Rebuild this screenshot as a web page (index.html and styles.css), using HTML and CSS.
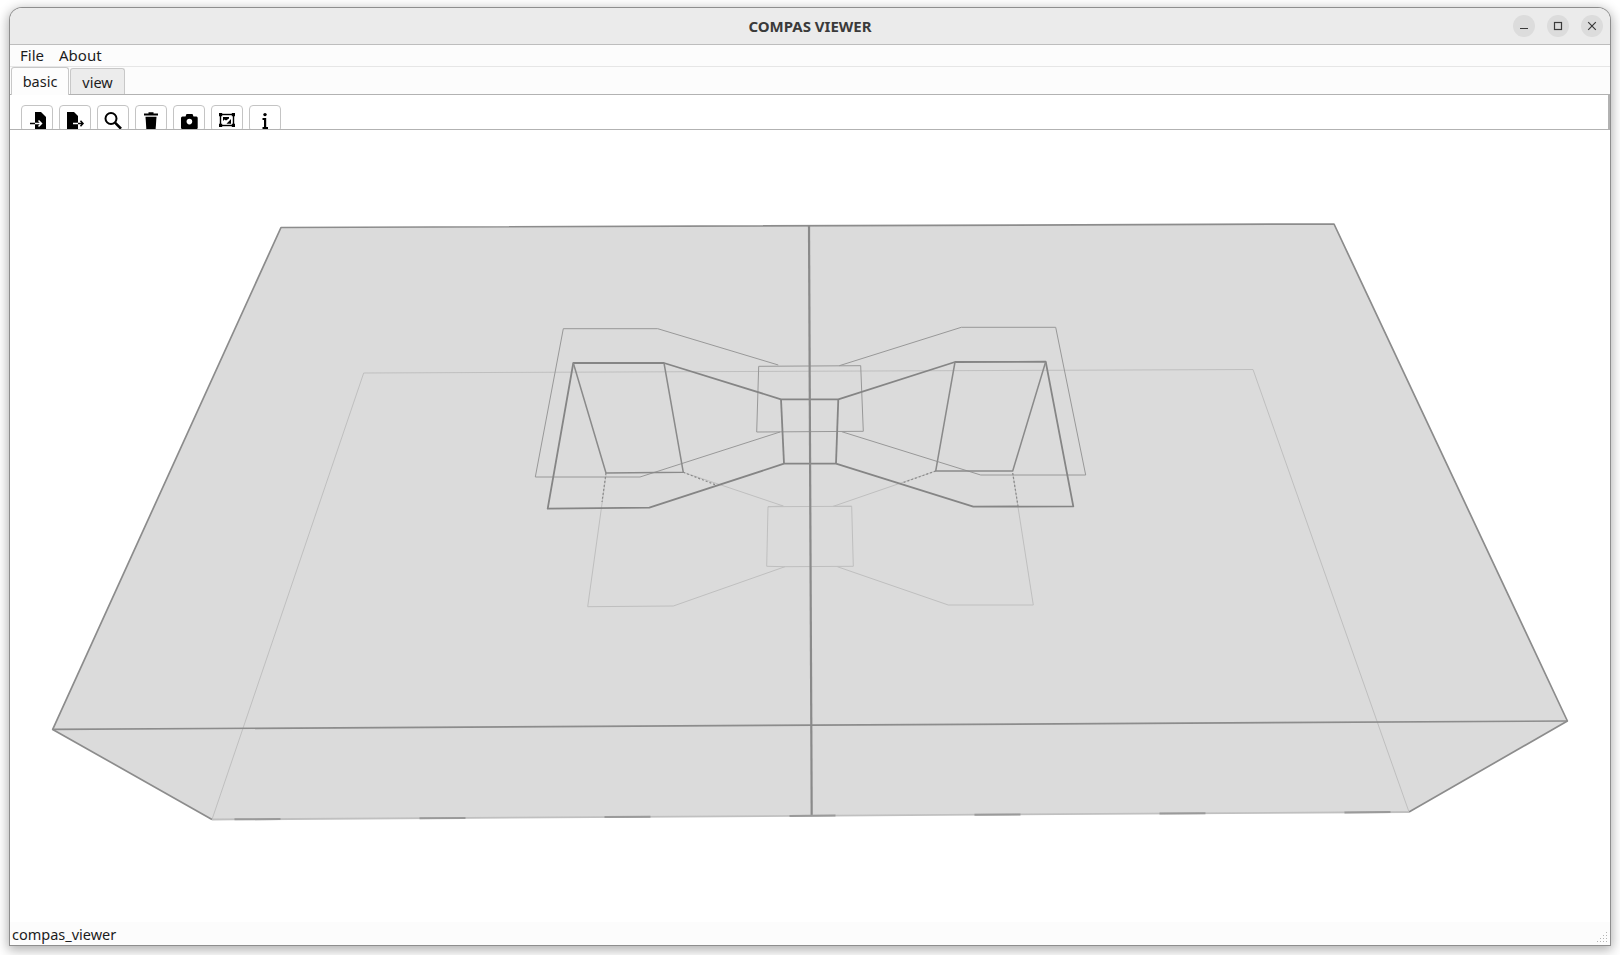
FILE: index.html
```html
<!DOCTYPE html>
<html lang="en">
<head>
<meta charset="utf-8">
<title>COMPAS VIEWER</title>
<link rel="stylesheet" href="styles.css">
</head>
<body>
<div class="window">
  <header class="titlebar">
    <span class="title">COMPAS VIEWER</span>
    <div class="controls">
      <span class="ctl"><svg width="22" height="22" viewBox="0 0 22 22"><path d="M7 13.5H15" class="ctl-i"/></svg></span>
      <span class="ctl"><svg width="22" height="22" viewBox="0 0 22 22"><rect x="7.5" y="7.5" width="7" height="7" class="ctl-i"/></svg></span>
      <span class="ctl"><svg width="22" height="22" viewBox="0 0 22 22"><path d="M7.2 7.2L14.8 14.8M14.8 7.2L7.2 14.8" class="ctl-i"/></svg></span>
    </div>
  </header>
  <nav class="menubar"><span>File</span><span>About</span></nav>
  <div class="tabbar">
    <span class="tab tab-on">basic</span>
    <span class="tab">view</span>
  </div>
  <div class="toolbar">
    <button class="tool"><svg class="ico" viewBox="0 0 20 20"><path d="M8 1H14L19 6V19H8Z"/><path d="M3 12.5H8" class="blk"/><path d="M8 12.5H14M11.5 9.5L14.5 12.5L11.5 15.5" class="wht"/></svg></button>
    <button class="tool"><svg class="ico" viewBox="0 0 20 20"><path d="M2 1H9L13 5V19H2Z"/><path d="M8 12.5H13" class="wht"/><path d="M13 12.5H18M15.5 9.8L18 12.5L15.5 15.2" class="blk"/></svg></button>
    <button class="tool"><svg class="ico" viewBox="0 0 20 20"><circle cx="8" cy="7.5" r="5.5" class="blk2"/><path d="M12 11.7L18 17.7" class="blk3"/></svg></button>
    <button class="tool"><svg class="ico" viewBox="0 0 20 20"><path d="M3 2.5H7.5V1.2H12.5V2.5H17V4.6H3Z"/><path d="M4.5 5.8H15.5L14.5 20H5.5Z"/></svg></button>
    <button class="tool"><svg class="ico" viewBox="0 0 20 20"><path d="M3.5 5.5H6.5L7.5 3H13.5L14.5 5.5H17.5Q18.7 5.5 18.7 7V17Q18.7 18 17.5 18H3.5Q2 18 2 17V7Q2 5.5 3.5 5.5Z"/><circle cx="10.4" cy="10.6" r="2.8" class="fw"/></svg></button>
    <button class="tool"><svg class="ico" viewBox="0 0 20 20"><rect x="3.5" y="3.5" width="13" height="11" class="blk2 thin"/><path d="M2 2H5.2V5.2H2ZM14.8 2H18V5.2H14.8ZM2 12.8H5.2V16H2ZM14.8 12.8H18V16H14.8Z"/><path d="M6 6H12V7.5L9 9.5L7.5 8.5L6 10Z"/><path d="M14 8V12.8H9.5Z"/></svg></button>
    <button class="tool"><svg class="ico" viewBox="0 0 20 20"><circle cx="10" cy="3.6" r="1.7"/><path d="M7.5 7H11.2V16H13V18H7.5V16H9V9H7.5Z"/></svg></button>
  </div>
  <main class="viewport">
    <svg class="scene" width="1600" height="792" viewBox="10 130 1600 792">
      <polygon class="solid" points="281,227.5 1334,224 1567.4,721 1409,812 212,819.5 52.7,729.4"/>
      <!-- far wireframe -->
      <polyline class="faint" points="212,819.5 363.7,373 1253,369.5 1409,812"/>
      <polyline class="faint" points="606,475 587.7,606.7 673.3,606 785,566.7 766.7,566.3 768,506.7 783.3,506 683.3,472.3"/>
      <polyline class="faint" points="785,566.7 853.3,566.3 851.7,506.3 768,506.7"/>
      <polyline class="faint" points="935.7,471 833.3,506.3 851.7,506.3"/>
      <polyline class="faint" points="1012.7,473 1033.3,605 948.3,605 837.3,566.7"/>
      <!-- middle outline -->
      <polyline class="mid" points="778.3,365 657.7,328.7 563.3,328.7 535.3,477 640,477 780,432"/>
      <polyline class="mid" points="839.3,365.7 961.3,327.3 1055.7,327.3 1085.7,475 980.7,475 841.7,431.7"/>
      <polygon class="mid" points="758.7,366.3 860.7,365.7 863.3,431.3 756.7,432"/>
      <!-- near outline -->
      <polygon class="thick" points="573.3,363 664,363 781,399.3 838.3,399.3 955,362 1045.7,361.7 1073.3,506.3 973.3,506.7 836,463.7 784,463.7 649.3,507.7 547.7,508.7"/>
      <line class="thick" x1="781" y1="399.3" x2="784" y2="463.7"/>
      <line class="thick" x1="838.3" y1="399.3" x2="836" y2="463.7"/>
      <polyline class="thick2" points="573.3,363 606,473 683.3,472.3 664,363"/>
      <polyline class="thick2" points="955,362 935.7,471 1012.7,471 1045.7,361.7"/>
      <path class="dots" d="M606 473L602 502M683.3 472.3L716 485M935.7 471L902 483M1012.7 473L1018 506"/>
      <!-- box edges -->
      <polyline class="edge" points="212,819.5 52.7,729.4 281,227.5 1334,224 1567.4,721 1409,812"/>
      <line class="edge" x1="52.7" y1="729.4" x2="1567.4" y2="721"/>
      <line class="axis" x1="809" y1="226" x2="811.7" y2="816"/>
      <line class="base" x1="212" y1="819.5" x2="1409" y2="812"/>
      <line class="base-d" x1="212" y1="819.5" x2="1409" y2="812"/>
    </svg>
  </main>
  <footer class="statusbar">
    <span>compas_viewer</span>
    <svg class="grip" width="11" height="11" viewBox="0 0 11 11"><path d="M9 0h1v1H9zM6 3h1v1H6zM9 3h1v1H9zM3 6h1v1H3zM6 6h1v1H6zM9 6h1v1H9zM0 9h1v1H0zM3 9h1v1H3zM6 9h1v1H6zM9 9h1v1H9z"/></svg>
  </footer>
</div>
</body>
</html>
```
FILE: styles.css
```css
* { box-sizing: border-box; }
html, body { margin: 0; height: 955px; overflow: hidden; background: #fff; }
body { padding: 8px 10px 10px; font-family: "Noto Sans", "Open Sans", sans-serif; color: #1c1c1c; }

.window {
  height: 937px;
  display: flex;
  flex-direction: column;
  border-radius: 12px 12px 0 0;
  box-shadow: 0 0 0 1px #8e8e8e, 0 3px 12px 2px rgba(0,0,0,.32);
  background: #fff;
  overflow: hidden;
}

.titlebar {
  height: 37px;
  flex: none;
  display: flex;
  align-items: center;
  justify-content: center;
  position: relative;
  background: #ebebeb;
  border-bottom: 1px solid #bdbdbd;
}
.title { font-size: 15px; font-weight: 700; color: #3a3a3a; }
.controls { position: absolute; right: 7px; top: 7px; display: flex; gap: 12px; }
.ctl { width: 22px; height: 22px; border-radius: 50%; background: #dcdcdc; display: block; }
.ctl svg { display: block; }
.ctl-i { fill: none; stroke: #3a3a3a; stroke-width: 1.2; }

.menubar {
  height: 22px;
  flex: none;
  display: flex;
  align-items: center;
  gap: 15px;
  padding: 0 0 2px 10px;
  font-size: 15px;
  background: #fcfcfc;
  border-bottom: 1px solid #e6e6e6;
}

.tabbar {
  height: 28px;
  flex: none;
  display: flex;
  align-items: flex-end;
  padding-left: 1px;
  background: #fcfcfc;
  border-bottom: 1px solid #b2b2b2;
}
.tab {
  height: 26px;
  width: 55px;
  margin-left: 1px;
  display: flex;
  align-items: center;
  justify-content: center;
  font-size: 14.5px;
  background: #ececec;
  border: 1px solid #c8c8c8;
  border-bottom: 0;
  border-radius: 3px 3px 0 0;
}
.tab-on {
  height: 28px;
  width: 58px;
  margin: 0 0 -1px;
  background: #fdfdfd;
  padding-bottom: 2px;
}

.toolbar {
  height: 35px;
  flex: none;
  display: flex;
  gap: 6px;
  padding: 10px 0 0 11px;
  overflow: hidden;
  background: #fff;
  border-right: 2px solid #b2b2b2;
  border-bottom: 1px solid #b2b2b2;
}
.tool {
  width: 32px;
  height: 27px;
  flex: none;
  padding: 5px 0 0 5px;
  margin: 0;
  background: #fff;
  border: 1px solid #c4c4c4;
  border-radius: 4px;
  display: block;
}
.ico { width: 20px; height: 20px; display: block; fill: #000; }
.blk { fill: none; stroke: #000; stroke-width: 1.5; }
.wht { fill: none; stroke: #fff; stroke-width: 1.5; }
.blk2 { fill: none; stroke: #000; stroke-width: 2; }
.blk3 { fill: none; stroke: #000; stroke-width: 2.6; }
.thin { stroke-width: 1.4; }
.fw { fill: #fff; }

.viewport { flex: 1; min-height: 0; overflow: hidden; background: #fff; }
.scene { display: block; }
.solid { fill: #dbdbdb; }
.faint, .mid, .thick, .thick2, .edge { fill: none; stroke-linejoin: round; }
.faint { stroke: #bfbfbf; stroke-width: 1; }
.mid { stroke: #989898; stroke-width: 1; }
.thick { stroke: #858585; stroke-width: 1.8; }
.thick2 { stroke: #8a8a8a; stroke-width: 1.5; }
.dots { fill: none; stroke: #8a8a8a; stroke-width: 1.2; stroke-dasharray: 2 2; }
.edge { stroke: #8c8c8c; stroke-width: 1.7; }
.axis { stroke: #8a8a8a; stroke-width: 2.2; }
.base { stroke: #c0c0c0; stroke-width: 1.8; }
.base-d { stroke: #9a9a9a; stroke-width: 2; stroke-dasharray: 46 139; stroke-dashoffset: -22.5; }

.statusbar {
  height: 23px;
  flex: none;
  display: flex;
  align-items: center;
  justify-content: space-between;
  padding: 1px 2px 0 2px;
  font-size: 14.5px;
  background: #fcfcfc;
}
.grip { fill: #b4b4b4; align-self: flex-end; margin-bottom: 2px; }
```
